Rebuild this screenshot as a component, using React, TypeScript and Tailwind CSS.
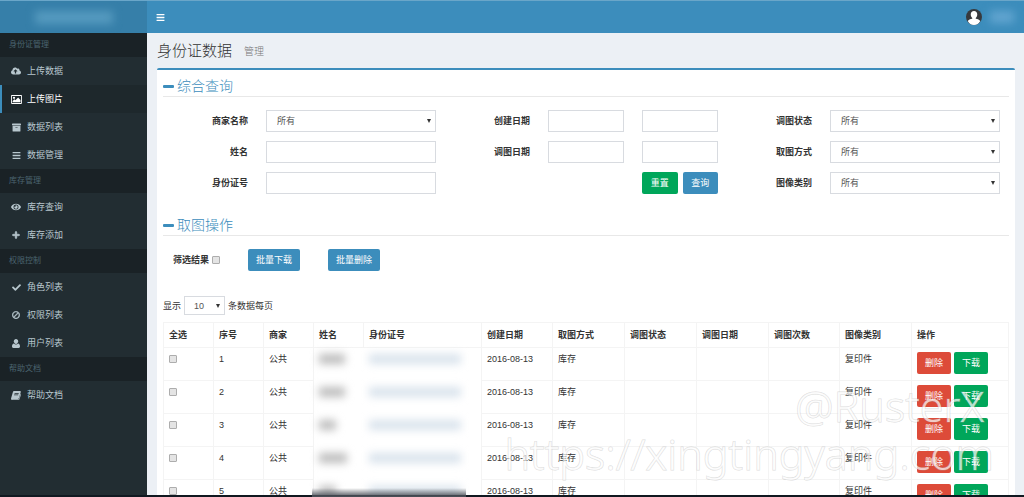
import type { ReactNode } from 'react';
import {
  FaArchive,
  FaBan,
  FaBars,
  FaCheck,
  FaCloudUploadAlt,
  FaEye,
  FaPlus,
} from 'react-icons/fa';

interface MenuItem {
  label: string;
  icon: ReactNode;
  active?: boolean;
}

interface MenuSection {
  title: string;
  items: MenuItem[];
}

function PictureIcon() {
  return (
    <svg viewBox="0 0 20 16" className="w-[11px] h-[9px]" fill="currentColor">
      <path fillRule="evenodd" d="M1.500 0h17A1.500 1.500 0 0 1 20 1.500v13a1.500 1.500 0 0 1-1.500 1.500h-17A1.500 1.500 0 0 1 0 14.500v-13A1.500 1.500 0 0 1 1.500 0zM1.600 1.600v12.800h16.800V1.600z" />
      <circle cx="5.500" cy="5" r="2" />
      <path d="M3 13.200v-2.700l3-3 2 2 5-5 4.200 4.200v4.500z" />
    </svg>
  );
}

function PersonIcon() {
  return (
    <svg viewBox="0 0 16 18" className="w-[8px] h-[9px]" fill="currentColor">
      <path d="M8 0c2.500 0 4.300 1.900 4.300 4.500S10.500 10 8 10 3.700 7.100 3.700 4.500 5.500 0 8 0z" />
      <path d="M4 9.200C5 10.500 6.400 11.200 8 11.200s3-.7 4-2c2.600.4 4 2.500 4 6 0 1.700-1 2.800-2.600 2.800H2.600C1 18 0 16.900 0 15.200c0-3.500 1.400-5.600 4-6z" />
    </svg>
  );
}

function BookIcon() {
  return (
    <svg viewBox="0 0 20 18" className="w-[10px] h-[9px]" fill="currentColor">
      <path fillRule="evenodd" d="M6.500 0H18c1.300 0 2 1 1.600 2.200L16 14c-.4 1.200-1.200 1.800-2.500 1.800H3.200c-.8 0-.9.900.1.900h11c1 0 1.600-.5 1.900-1.400l3-9.800c.8.4 1 1 .7 1.900l-2.900 9C16.600 17.500 15.700 18 14.500 18H3C1 18-.4 16.300.2 14.400L3.700 2.500C4.200.9 5 0 6.500 0zM7.300 4l-.4 1.300h8.300l.4-1.300zM6.400 7L6 8.300h8.300l.4-1.300z" />
    </svg>
  );
}

const sections: MenuSection[] = [
  {
    title: '身份证管理',
    items: [
      { label: '上传数据', icon: <FaCloudUploadAlt size={10} /> },
      { label: '上传图片', icon: <PictureIcon />, active: true },
      { label: '数据列表', icon: <FaArchive size={9} /> },
      { label: '数据管理', icon: <FaBars size={9} /> },
    ],
  },
  {
    title: '库存管理',
    items: [
      { label: '库存查询', icon: <FaEye size={10} /> },
      { label: '库存添加', icon: <FaPlus size={8} stroke="currentColor" strokeWidth={40} /> },
    ],
  },
  {
    title: '权限控制',
    items: [
      { label: '角色列表', icon: <FaCheck size={9} /> },
      { label: '权限列表', icon: <FaBan size={8} className="-scale-x-100" stroke="currentColor" strokeWidth={20} /> },
      { label: '用户列表', icon: <PersonIcon /> },
    ],
  },
  {
    title: '帮助文档',
    items: [{ label: '帮助文档', icon: <BookIcon /> }],
  },
];

const columns = [
  { title: '全选', width: 'w-[50px]' },
  { title: '序号', width: 'w-[50px]' },
  { title: '商家', width: 'w-[50px]' },
  { title: '姓名', width: 'w-[50px]' },
  { title: '身份证号', width: 'w-[118px]' },
  { title: '创建日期', width: 'w-[71px]' },
  { title: '取图方式', width: 'w-[72px]' },
  { title: '调图状态', width: 'w-[72px]' },
  { title: '调图日期', width: 'w-[72px]' },
  { title: '调图次数', width: 'w-[71px]' },
  { title: '图像类别', width: 'w-[72px]' },
  { title: '操作', width: '' },
];

const rows = [
  { id: 1, nameWidth: 'w-[26px]' },
  { id: 2, nameWidth: 'w-[26px]' },
  { id: 3, nameWidth: 'w-[17px]' },
  { id: 4, nameWidth: 'w-[28px]' },
  { id: 5, nameWidth: 'w-[17px]' },
];

const checkboxClass =
  'block appearance-none w-[8px] h-[8px] rounded-[1px] border border-[#adadad] bg-[#e4e4e4] checked:bg-[#3c8dbc]';

const cellClass = 'border border-[#f4f4f4] px-[5px] pt-[4px] pb-[5px] align-top';

function Caret() {
  return (
    <svg viewBox="0 0 4 4" className="absolute right-[5px] top-1/2 -translate-y-1/2 w-[4px] h-[4px] pointer-events-none" fill="#333">
      <path d="M0 0h4L2 4z" />
    </svg>
  );
}

function Legend({ children }: { children: ReactNode }) {
  return (
    <h2 className="flex items-center gap-[3px] pt-[6px] h-[27px] border-b border-[#e8e8e8] text-[14px] leading-[20px] font-light text-[#3c8dbc]">
      <span className="w-[11px] h-[3px] rounded-[1px] bg-[#3c8dbc]" />
      {children}
    </h2>
  );
}

function Field({ id, label, children }: { id: string; label: string; children: ReactNode }) {
  return (
    <div className="grid grid-cols-3 items-center">
      <label htmlFor={id} className="px-[9px] text-right font-bold text-[#333]">{label}</label>
      {children}
    </div>
  );
}

function SelectField({ id, label }: { id: string; label: string }) {
  return (
    <Field id={id} label={label}>
      <div className="col-span-2 px-[9px]">
        <div className="relative">
          <select id={id} className="block appearance-none w-full h-[22px] px-[10px] border border-[#d8dbe0] bg-white text-[#555]">
            <option>所有</option>
          </select>
          <Caret />
        </div>
      </div>
    </Field>
  );
}

function TextField({ id, label }: { id: string; label: string }) {
  return (
    <Field id={id} label={label}>
      <div className="col-span-2 px-[9px]">
        <input id={id} type="text" className="block w-full h-[22px] px-[10px] border border-[#d8dbe0] bg-white" />
      </div>
    </Field>
  );
}

function DateRangeField({ id, label }: { id: string; label: string }) {
  return (
    <Field id={id} label={label}>
      <div className="px-[9px]">
        <input id={id} type="text" className="block w-full h-[22px] px-1 border border-[#d8dbe0] bg-white" />
      </div>
      <div className="px-[9px]">
        <input type="text" aria-label={label} className="block w-full h-[22px] px-1 border border-[#d8dbe0] bg-white" />
      </div>
    </Field>
  );
}

function Sidebar() {
  return (
    <aside className="w-[147px] shrink-0 bg-[#222d32]">
      <nav>
        {sections.map((section) => (
          <div key={section.title}>
            <div className="h-[24px] pl-[9px] flex items-center bg-[#1a2226] text-[8px] text-[#4b646f]">{section.title}</div>
            {section.items.map((item) => (
              <a
                key={item.label}
                href="#"
                className={
                  item.active
                    ? 'h-[28px] flex items-center gap-[5px] pl-[8px] border-l-2 border-[#3c8dbc] bg-[#1e282c] text-white'
                    : 'h-[28px] flex items-center gap-[5px] pl-[8px] border-l-2 border-transparent text-[#b8c7ce]'
                }
              >
                <span className="w-[12px] flex justify-center">{item.icon}</span>
                {item.label}
              </a>
            ))}
          </div>
        ))}
      </nav>
    </aside>
  );
}

function DataTable() {
  return (
    <table className="mt-[7px] w-full table-fixed border-collapse text-left text-[#333]">
      <thead>
        <tr className="h-[25px]">
          {columns.map((column) => (
            <th key={column.title} className={`${column.width} border border-[#f4f4f4] px-[5px] font-bold`}>{column.title}</th>
          ))}
        </tr>
      </thead>
      <tbody>
        {rows.map((row) => (
          <tr key={row.id} className="h-[33px]">
            <td className={cellClass}>
              <div className="h-[14px] flex items-center">
                <input type="checkbox" aria-label={`选择 ${row.id}`} className={checkboxClass} />
              </div>
            </td>
            <td className={cellClass}>{row.id}</td>
            <td className={cellClass}>公共</td>
            <td className="px-[5px] pt-[6px] align-top">
              <div className={`${row.nameWidth} h-[10px] bg-[#bcbcbc] blur-[4px]`} />
            </td>
            <td className="px-[5px] pt-[6px] align-top">
              <div className="w-[92px] h-[10px] bg-[#d9e3ec] blur-[4px]" />
            </td>
            <td className={cellClass}>2016-08-13</td>
            <td className={cellClass}>库存</td>
            <td className={cellClass} />
            <td className={cellClass} />
            <td className={cellClass} />
            <td className={cellClass}>复印件</td>
            <td className={cellClass}>
              <div className="flex gap-[3px]">
                <button type="button" className="h-[22px] px-2 rounded-[2px] bg-[#dd4b39] text-white">删除</button>
                <button type="button" className="h-[22px] px-2 rounded-[2px] bg-[#00a65a] text-white">下载</button>
              </div>
            </td>
          </tr>
        ))}
      </tbody>
    </table>
  );
}

export default function App() {
  return (
    <div className="relative h-screen overflow-hidden flex flex-col bg-[#ecf0f5] font-['Liberation_Sans','Noto_Sans_CJK_SC',sans-serif] text-[9px] leading-[14px]">
      <header className="h-[33px] shrink-0 flex border-t border-[#6aa6c9] bg-[#3c8dbc]">
        <div className="w-[147px] shrink-0 flex items-center justify-center bg-[#367fa9]">
          <div className="w-[78px] h-[13px] bg-[#559abf] blur-[4px]" />
        </div>
        <div className="flex-1 flex items-center justify-between pl-[9px] pr-[10px]">
          <button type="button" aria-label="菜单" className="text-white">
            <FaBars size={9} />
          </button>
          <div className="flex items-center gap-[8px]">
            <svg viewBox="0 0 32 32" className="w-[16px] h-[16px]">
              <circle cx="16" cy="16" r="16" fill="#37393d" />
              <path d="M16 4c4 0 6.500 3 6.500 7 0 3-1.200 5.500-3 6.800v1.500c4 .8 7.500 2.200 9 4.700A15 15 0 0 1 16 32 15 15 0 0 1 3.500 24c1.500-2.500 5-3.900 9-4.700v-1.500c-1.800-1.300-3-3.800-3-6.800 0-4 2.500-7 6.500-7z" fill="#fff" />
            </svg>
            <div className="w-[24px] h-[12px] bg-[#62a5d0] blur-[4px]" />
          </div>
        </div>
      </header>

      <div className="flex-1 min-h-0 flex">
        <Sidebar />
        <main className="flex-1 min-w-0 pl-[10px] pr-[9px]">
          <div className="h-[35px] flex items-center gap-[12px]">
            <h1 className="text-[15px] text-[#333] font-light">身份证数据</h1>
            <small className="pt-[2px] text-[10px] text-[#777] font-light">管理</small>
          </div>

          <div className="px-[6px] pb-[10px] border-t-2 border-[#3c8dbc] rounded-t-[2px] bg-white">
            <Legend>综合查询</Legend>
            <form className="mt-[13px] grid grid-cols-3 gap-y-[9px]">
              <SelectField id="merchant" label="商家名称" />
              <DateRangeField id="created" label="创建日期" />
              <SelectField id="status" label="调图状态" />
              <TextField id="name" label="姓名" />
              <DateRangeField id="fetched" label="调图日期" />
              <SelectField id="method" label="取图方式" />
              <TextField id="idcard" label="身份证号" />
              <div className="grid grid-cols-3">
                <div className="col-start-3 px-[9px] flex gap-[5px]">
                  <button type="reset" className="flex-1 h-[22px] rounded-[2px] bg-[#00a65a] text-white">重置</button>
                  <button type="button" className="flex-1 h-[22px] rounded-[2px] bg-[#3c8dbc] text-white">查询</button>
                </div>
              </div>
              <SelectField id="category" label="图像类别" />
            </form>

            <div className="mt-[15px]">
              <Legend>取图操作</Legend>
            </div>
            <div className="mt-[13px] flex items-center gap-[28px]">
              <div className="w-[57px] pl-[10px] flex items-center gap-[3px]">
                <label htmlFor="filtered" className="shrink-0 font-bold text-[#333]">筛选结果</label>
                <input id="filtered" type="checkbox" className={`${checkboxClass} shrink-0`} />
              </div>
              <button type="button" className="h-[22px] px-2 rounded-[2px] bg-[#3c8dbc] text-white">批量下载</button>
              <button type="button" className="h-[22px] px-2 rounded-[2px] bg-[#3c8dbc] text-white">批量删除</button>
            </div>

            <div className="mt-[25px] flex items-center gap-[3px] text-[#333]">
              <label htmlFor="page-size">显示</label>
              <div className="relative">
                <select id="page-size" className="block appearance-none w-[41px] h-[19px] px-[9px] border border-[#d8dbe0] bg-white text-[#555]">
                  <option>10</option>
                </select>
                <Caret />
              </div>
              <span>条数据每页</span>
            </div>

            <DataTable />
          </div>
        </main>
      </div>

      <footer className="relative h-[2px] shrink-0 bg-[#101820]">
        <div className="absolute left-[312px] bottom-0 w-[154px] h-[9px] bg-linear-to-t from-[#4b5058] to-transparent" />
      </footer>

      <div className="absolute right-[30px] bottom-[19px] text-right text-[43px] leading-[48px] font-light font-['Noto_Sans',sans-serif] text-white/70 [-webkit-text-stroke:1px_#a8a8a866] [paint-order:stroke_fill] pointer-events-none">
        <div className="pr-[10px]">@RusterX</div>
        <div>https://xingtingyang.com</div>
      </div>
    </div>
  );
}
